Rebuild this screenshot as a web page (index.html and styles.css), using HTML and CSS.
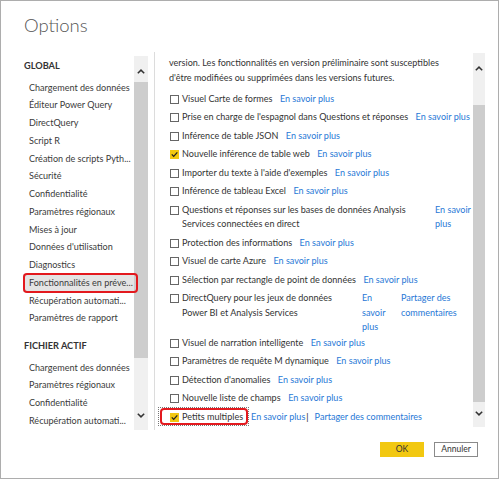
FILE: index.html
```html
<!DOCTYPE html>
<html lang="fr">
<head>
<meta charset="utf-8">
<title>Options</title>
<link rel="stylesheet" href="styles.css">
</head>
<body>
<div class="dialog">
  <div class="title">Options</div>
  <div class="main">
    <div class="sidebar">
      <div class="nav">
        <h3 class="head">GLOBAL</h3>
        <ul class="items">
          <li>Chargement des données</li>
          <li>Éditeur Power Query</li>
          <li>DirectQuery</li>
          <li>Script R</li>
          <li>Création de scripts Pyth...</li>
          <li>Sécurité</li>
          <li>Confidentialité</li>
          <li>Paramètres régionaux</li>
          <li>Mises à jour</li>
          <li>Données d'utilisation</li>
          <li>Diagnostics</li>
          <li class="sel">Fonctionnalités en préve...</li>
          <li>Récupération automati...</li>
          <li>Paramètres de rapport</li>
        </ul>
        <h3 class="head second">FICHIER ACTIF</h3>
        <ul class="items">
          <li>Chargement des données</li>
          <li>Paramètres régionaux</li>
          <li>Confidentialité</li>
          <li>Récupération automati...</li>
        </ul>
      </div>
      <div class="vscroll left">
        <div class="arrow up"><svg width="8" height="5" viewBox="0 0 8 5"><polyline points="0.8,4.3 4,1.1 7.2,4.3" fill="none" stroke="#333" stroke-width="1.5"/></svg></div>
        <div class="thumb"></div>
        <div class="fill"></div>
        <div class="arrow down"><svg width="8" height="5" viewBox="0 0 8 5"><polyline points="0.8,0.7 4,3.9 7.2,0.7" fill="none" stroke="#333" stroke-width="1.5"/></svg></div>
      </div>
    </div>
    <div class="content">
      <div class="pane">
        <p class="intro">version. Les fonctionnalités en version préliminaire sont susceptibles<br>d'être modifiées ou supprimées dans les versions futures.</p>
        <ul class="features">
          <li class="feat"><span class="cb"></span><span class="lbl">Visuel Carte de formes</span><a class="lnk">En savoir plus</a></li>
          <li class="feat"><span class="cb"></span><span class="lbl">Prise en charge de l'espagnol dans Questions et réponses</span><a class="lnk">En savoir plus</a></li>
          <li class="feat"><span class="cb"></span><span class="lbl">Inférence de table JSON</span><a class="lnk">En savoir plus</a></li>
          <li class="feat"><span class="cb on"><svg width="9" height="9" viewBox="0 0 9 9"><polyline points="1.8,4.4 3.7,6.4 7.3,2.4" fill="none" stroke="#222" stroke-width="1.3"/></svg></span><span class="lbl">Nouvelle inférence de table web</span><a class="lnk">En savoir plus</a></li>
          <li class="feat"><span class="cb"></span><span class="lbl">Importer du texte à l'aide d'exemples</span><a class="lnk">En savoir plus</a></li>
          <li class="feat"><span class="cb"></span><span class="lbl">Inférence de tableau Excel</span><a class="lnk">En savoir plus</a></li>
          <li class="feat"><span class="cb"></span><span class="lbl col-qa">Questions et réponses sur les bases de données Analysis<br>Services connectées en direct</span><a class="lnk">En savoir<br>plus</a></li>
          <li class="feat"><span class="cb"></span><span class="lbl">Protection des informations</span><a class="lnk">En savoir plus</a></li>
          <li class="feat"><span class="cb"></span><span class="lbl">Visuel de carte Azure</span><a class="lnk">En savoir plus</a></li>
          <li class="feat"><span class="cb"></span><span class="lbl">Sélection par rectangle de point de données</span><a class="lnk">En savoir plus</a></li>
          <li class="feat tight"><span class="cb"></span><span class="lbl col-dq">DirectQuery pour les jeux de données<br>Power BI et Analysis Services</span><a class="lnk col-link">En<br>savoir<br>plus</a><a class="lnk">Partager des<br>commentaires</a></li>
          <li class="feat"><span class="cb"></span><span class="lbl">Visuel de narration intelligente</span><a class="lnk">En savoir plus</a></li>
          <li class="feat"><span class="cb"></span><span class="lbl">Paramètres de requête M dynamique</span><a class="lnk">En savoir plus</a></li>
          <li class="feat"><span class="cb"></span><span class="lbl">Détection d'anomalies</span><a class="lnk">En savoir plus</a></li>
          <li class="feat"><span class="cb"></span><span class="lbl">Nouvelle liste de champs</span><a class="lnk">En savoir plus</a></li>
          <li class="feat"><span class="mark"><span class="cb on"><svg width="9" height="9" viewBox="0 0 9 9"><polyline points="1.8,4.4 3.7,6.4 7.3,2.4" fill="none" stroke="#222" stroke-width="1.3"/></svg></span><span class="lbl">Petits multiples</span></span><a class="lnk">En savoir plus</a><span class="bar">|</span><a class="lnk">Partager des commentaires</a></li>
        </ul>
      </div>
      <div class="vscroll right">
        <div class="arrow up"><svg width="8" height="5" viewBox="0 0 8 5"><polyline points="0.8,4.3 4,1.1 7.2,4.3" fill="none" stroke="#333" stroke-width="1.5"/></svg></div>
        <div class="fill"></div>
        <div class="thumb"></div>
        <div class="arrow down"><svg width="8" height="5" viewBox="0 0 8 5"><polyline points="0.8,0.7 4,3.9 7.2,0.7" fill="none" stroke="#333" stroke-width="1.5"/></svg></div>
      </div>
    </div>
  </div>
  <div class="footer">
    <button class="btn ok">OK</button>
    <button class="btn cancel">Annuler</button>
  </div>
</div>
</body>
</html>
```

FILE: styles.css
```css
* { box-sizing: border-box; margin: 0; padding: 0; }
html, body { width: 500px; height: 480px; background: #fff; overflow: hidden; }
body { font-family: Lato, "Open Sans", sans-serif; color: #333; font-size: 9.05px; }

.dialog {
  width: 499px; height: 479px;
  border: 1px solid #adadad;
  display: flex; flex-direction: column;
  background: #fff;
}
.title {
  height: 51px; flex: none;
  padding: 13.7px 0 0 23px;
  font-size: 18.5px; font-weight: 300; line-height: 20px;
  color: #555;
}
.main { height: 378px; flex: none; display: flex; overflow: clip; }

/* sidebar */
.sidebar {
  width: 154px; flex: none;
  border-right: 1px solid #dcdcdc;
  display: flex;
  padding-left: 22px;
}
.nav { width: 111px; flex: none; padding-top: 5px; }
.head {
  font-size: 9.2px; font-weight: 700;
  height: 18px; line-height: 18px;
  padding-left: 1px; margin-bottom: 3.5px;
  color: #333;
}
.head.second { margin-top: 10px; }
.items { list-style: none; }
.items li {
  height: 17.75px; line-height: 17.75px;
  padding-left: 6px; white-space: nowrap;
  color: #3a3a3a;
}
.items li.sel { background: #e4e4e4; position: relative; z-index: 2; }
.items li.sel::after {
  content: ""; position: absolute;
  left: -0.5px; right: -4px; top: -0.5px; bottom: -1px;
  border: 2px solid #e3191e; border-radius: 4px;
}

/* scrollbars */
.vscroll { display: flex; flex-direction: column; background: #f0f0f0; flex: none; }
.vscroll .arrow { display: flex; justify-content: center; align-items: center; flex: none; }
.vscroll .thumb { background: #cdcdcd; flex: none; }
.vscroll .fill { flex: 1; }
.vscroll.left { width: 14px; margin-top: 4px; height: 374px; }
.vscroll.left .up { height: 26px; padding-top: 4px; }
.vscroll.left .thumb { height: 276px; }
.vscroll.left .down { height: 26px; padding-bottom: 4px; }

.content { flex: 1; display: flex; min-width: 0; }
.pane { flex: 1; padding: 2.5px 0 0 14px; overflow: hidden; min-width: 0; }
.vscroll.right { width: 12px; margin: 1px 13px 3px 0; }
.vscroll.right .up { height: 30px; }
.vscroll.right .thumb { height: 297px; }
.vscroll.right .down { height: 25px; padding-bottom: 3px; }

/* content */
.intro { line-height: 15px; margin-bottom: 7.25px; white-space: nowrap; color: #333; }
.features { list-style: none; }
.feat { display: flex; align-items: flex-start; line-height: 14.5px; margin-bottom: 4px; white-space: nowrap; }
.feat.tight { margin-bottom: 1px; }
.cb {
  width: 9px; height: 9px; flex: none;
  border: 1px solid #666; background: #fff;
  margin: 2.75px 3px 0 1px;
  display: flex;
}
.cb.on { background: #f2c811; border-color: #f2c811; }
.cb.on svg { margin: -1px; }
.lbl { margin-right: 7.5px; color: #333; }
.lbl.col-qa { width: 253px; margin-right: 0; }
.lbl.col-dq { width: 180px; margin-right: 0; }
.lnk { color: #2778d6; text-decoration: none; }
.lnk.col-link { width: 39px; flex: none; }
.mark { display: flex; align-items: flex-start; position: relative; margin-right: 8px; }
.mark .lbl { margin-right: 0; }
.mark::before {
  content: ""; position: absolute;
  left: -11px; right: -6px; top: -2.5px; bottom: -2px;
  border: 1px dotted #777;
}
.mark::after {
  content: ""; position: absolute;
  left: -9px; right: -5px; top: -1.75px; bottom: -0.75px;
  border: 2px solid #e3191e; border-radius: 4px;
}
.bar { color: #222; margin: 0 6px 0 1px; }

/* footer */
.footer {
  height: 48px; flex: none;
  display: flex; justify-content: flex-end; align-items: flex-start;
  gap: 10px; padding: 12px 20px 0 0;
}
.btn {
  width: 44px; height: 15px;
  font-family: Lato, "Open Sans", sans-serif; font-size: 8.5px; line-height: 13px;
  color: #333; background: #fff; border: 1px solid #8a8a8a;
}
.btn.ok { background: #f2c811; border-color: #f2c811; }
```
